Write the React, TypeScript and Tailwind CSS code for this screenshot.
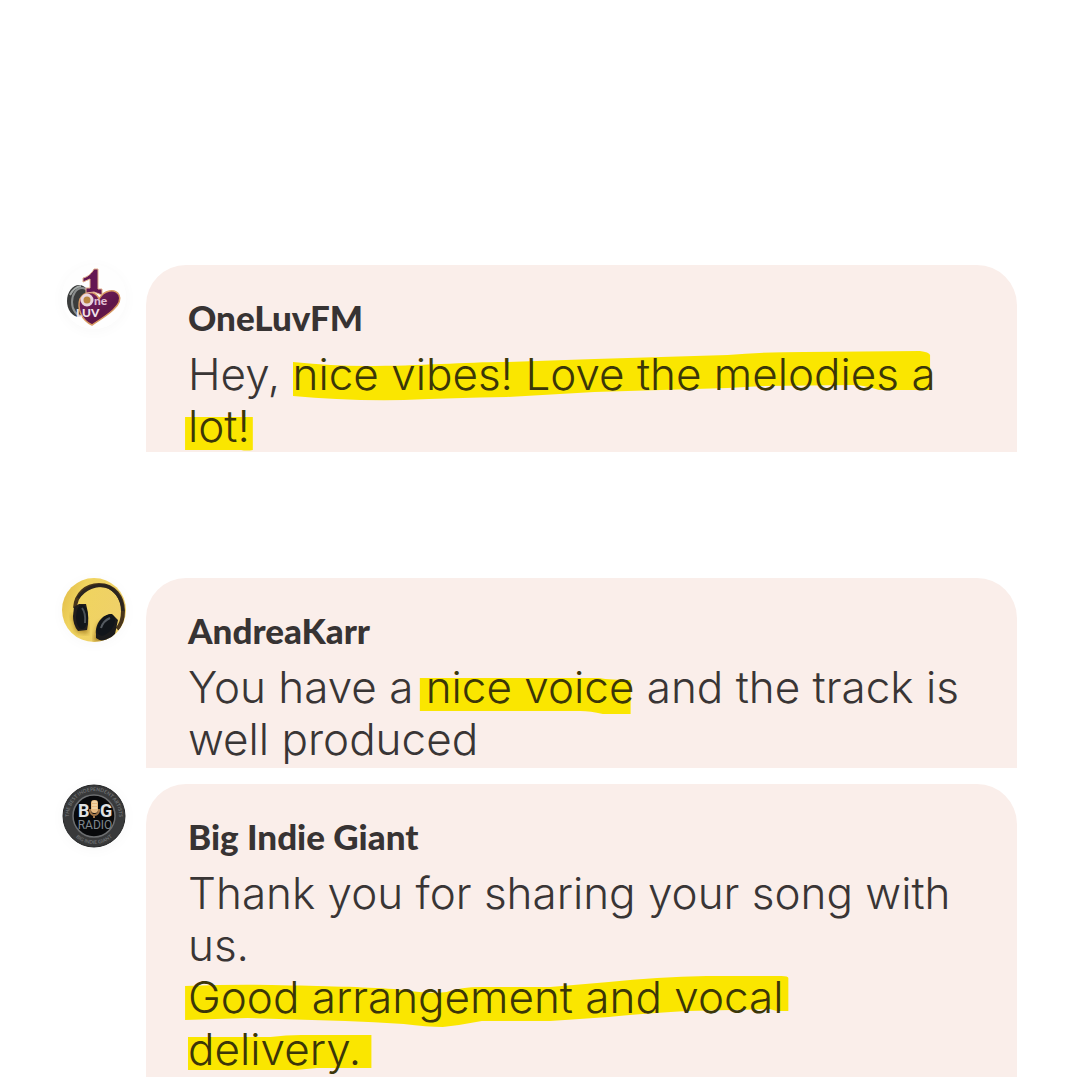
import type { ReactNode } from "react";
import clsx from "clsx";

type Line = {
  text: string;
  marked?: string;
  // rest of the line after the marked phrase
  after?: string;
  // width of the marked text that the stroke path was drawn for
  strokeWidth?: number;
  stroke?: string;
};

type Comment = {
  author: string;
  avatar: ReactNode;
  lines: Line[];
  className?: string;
  cardClassName?: string;
};

const OneLuvLogo = () => (
  <svg viewBox="0 0 64 64" className="size-16" aria-hidden="true">
    <defs>
      <linearGradient id="luv-heart" x1="0" y1="0" x2="1" y2="1">
        <stop offset="0" stopColor="#7c2566" />
        <stop offset="0.6" stopColor="#5d1549" />
        <stop offset="1" stopColor="#8a2a3c" />
      </linearGradient>
    </defs>
    <circle cx="32" cy="32" r="32" fill="#fefefe" />
    <ellipse cx="17" cy="36" rx="12" ry="16" fill="#3a3c3c" />
    <ellipse cx="20" cy="37" rx="10" ry="14" fill="none" stroke="#8b8f8f" strokeWidth="2" />
    <path d="M8 30Q12 22 19 21" fill="none" stroke="#a5aaa8" strokeWidth="2" />
    <path
      d="M30 60C19 55 15 43 18 34C22 26 33 25 37 34C42 25 53 23 57 30C62 40 44 51 30 60Z"
      fill="url(#luv-heart)"
      stroke="#d89a62"
      strokeWidth="1.5"
    />
    <path
      d="M21 13C26 12 30 8 32 4L36 4V24H40V30L32 27L24 28V23H28V14L21 17Z"
      fill="#641653"
      stroke="#e3b08c"
      strokeWidth="1"
    />
    <circle cx="25" cy="35" r="5" fill="#b98540" stroke="#ead6df" strokeWidth="3" />
    <text x="32" y="40" fill="#e0bfd2" className="font-['Lato'] text-[12px] font-black">
      ne
    </text>
    <text x="14" y="52" fill="#f0e2ea" className="font-['Lato'] text-[12px] font-black">
      LUV
    </text>
  </svg>
);

const HeadphonesPhoto = () => (
  <svg viewBox="0 0 64 64" className="size-16" aria-hidden="true">
    <defs>
      <clipPath id="phones-clip">
        <circle cx="32" cy="32" r="32" />
      </clipPath>
      <linearGradient id="phones-bg" x1="0" y1="0" x2="1" y2="0.4">
        <stop offset="0" stopColor="#dfb744" />
        <stop offset="0.35" stopColor="#f0d45f" />
        <stop offset="1" stopColor="#efd069" />
      </linearGradient>
      <filter id="phones-shadow">
        <feGaussianBlur stdDeviation="2" />
      </filter>
    </defs>
    <g clipPath="url(#phones-clip)">
      <rect width="64" height="64" fill="url(#phones-bg)" />
      <path d="M9 36L14 54L26 56V45Z" fill="#9c751c" opacity="0.7" filter="url(#phones-shadow)" />
      <path d="M32 60L36 46L50 40L47 64H32Z" fill="#9c751c" opacity="0.8" filter="url(#phones-shadow)" />
      <path
        d="M13 30C14 16 24 7 37 7C53 7 61 20 61 33C61 41 59 47 55 51"
        fill="none"
        stroke="#48351b"
        strokeWidth="4"
      />
      <path d="M16 20C23 10 34 6 44 8C53 11 60 20 61 33" fill="none" stroke="#2b251f" strokeWidth="3" />
      <path d="M12 29L17 26L24 26Q28 40 25 52L16 53Q11 47 11 38Z" fill="#211e1d" />
      <ellipse cx="20" cy="39" rx="6" ry="12" fill="#11151a" />
      <path d="M20 30Q24 35 23 45" fill="none" stroke="#4b5157" strokeWidth="2" />
      <path d="M34 56C33 46 40 36 50 36L56 42L53 56C48 64 39 64 34 60Z" fill="#1b1b1c" />
      <ellipse cx="44" cy="47" rx="7" ry="12" transform="rotate(35 44 47)" fill="#11151a" />
      <path d="M39 50Q41 43 48 40" fill="none" stroke="#555b62" strokeWidth="2" />
    </g>
  </svg>
);

const BigRadioLogo = () => (
  <svg viewBox="0 0 64 64" className="size-16" aria-hidden="true">
    <defs>
      <path id="ring-top" d="M7 32A25 25 0 0 1 57 32" />
      <path id="ring-bottom" d="M4 32A28 28 0 0 0 60 32" />
    </defs>
    <circle cx="32" cy="32" r="31" fill="#38393a" stroke="#252627" strokeWidth="1" />
    <circle cx="32" cy="32" r="21" fill="#08090b" stroke="#6c6e70" strokeWidth="1.5" />
    <g fill="#6f7173" className="font-['Lato'] text-[5px] font-bold">
      <text>
        <textPath href="#ring-top" startOffset="50%" textAnchor="middle">
          THE BEST INDEPENDENT ARTISTS
        </textPath>
      </text>
      <text>
        <textPath href="#ring-bottom" startOffset="50%" textAnchor="middle">
          BIG INDIE GIANT
        </textPath>
      </text>
    </g>
    <text x="16" y="33" fill="#e0e2e4" className="font-['Roboto'] text-[18px] font-bold">
      B
    </text>
    <text x="38" y="33" fill="#e0e2e4" className="font-['Roboto'] text-[18px] font-bold">
      G
    </text>
    <rect x="29" y="16" width="7" height="13" rx="3" fill="#e6b87e" />
    <path d="M30 18H35M30 21H35M30 24H35" stroke="#fff0ca" strokeWidth="1" />
    <path d="M28 25V27Q29 31 32 31Q36 31 37 27V25M32 31V34" fill="none" stroke="#a07446" strokeWidth="2" />
    <text x="33" y="45" textAnchor="middle" fill="#7f868d" className="font-['Roboto'] text-[12px]">
      RADIO
    </text>
  </svg>
);

const comments: Comment[] = [
  {
    author: "OneLuvFM",
    avatar: <OneLuvLogo />,
    className: "mb-[126px]",
    lines: [
      {
        text: "Hey, ",
        marked: "nice vibes! Love the melodies a",
        strokeWidth: 642,
        stroke:
          "M0 14Q40 18 71 18C130 18 170 14 213 14L301 11L434 7Q470 4 510 4L626 3Q635 4 636 7V42H585Q570 37 558 37L471 38L434 40L301 44L213 49Q160 50 111 52Q50 53 0 48Z",
      },
      {
        text: "",
        marked: "lot!",
        strokeWidth: 63,
        stroke: "M-3 17H66V50Q60 51 54 50H-3Z",
      },
    ],
  },
  {
    author: "AndreaKarr",
    avatar: <HeadphonesPhoto />,
    className: "mb-4",
    cardClassName: "pb-[3px]",
    lines: [
      {
        text: "You have a ",
        marked: "nice voice",
        after: " and the track is",
        strokeWidth: 203,
        stroke: "M-6 17H168Q180 19 199 19V53H172Q160 50 150 50H-6Z",
      },
      { text: "well produced" },
    ],
  },
  {
    author: "Big Indie Giant",
    avatar: <BigRadioLogo />,
    cardClassName: "pb-[2px]",
    lines: [
      { text: "Thank you for sharing your song with" },
      { text: "us." },
      {
        text: "",
        marked: "Good arrangement and vocal",
        strokeWidth: 610,
        stroke:
          "M-3 15Q50 13 86 14C140 15 180 16 211 18C235 21 252 23 265 21Q280 16 300 16H371L431 11Q480 6 531 5H608Q615 5 615 7V40H603L596 38L511 40Q460 43 431 46L371 50L301 50Q280 54 261 56Q245 56 221 53Q190 51 161 50L61 47L-3 49Z",
      },
      {
        text: "",
        marked: "delivery.",
        strokeWidth: 168,
        stroke: "M0 14H80Q95 12 110 12H178V45H125L105 47H0Z",
      },
    ],
  },
];

const CommentLine = ({ line }: { line: Line }) => (
  <span className="block whitespace-pre">
    {line.text}
    {line.marked && (
      <mark className="relative inline-block bg-transparent text-[#3b3608]">
        <svg
          viewBox={`0 0 ${line.strokeWidth} 52`}
          preserveAspectRatio="none"
          className="absolute inset-0 size-full overflow-visible"
          aria-hidden="true"
        >
          <path d={line.stroke} fill="#fae600" />
        </svg>
        <span className="relative">{line.marked}</span>
      </mark>
    )}
    {line.after}
  </span>
);

const CommentCard = ({ comment }: { comment: Comment }) => (
  <li className={clsx("flex items-start gap-5", comment.className)}>
    <div className="shrink-0 rounded-full shadow-[0_2px_14px_#00000008]">{comment.avatar}</div>
    <article
      className={clsx(
        "min-w-0 flex-1 rounded-t-[40px] bg-[#faeeea] px-[42px] pt-[34px]",
        comment.cardClassName
      )}
    >
      <h2 className="font-['Lato',sans-serif] text-[35px] leading-9 font-black text-[#373333]">
        {comment.author}
      </h2>
      <p className="mt-[13px] font-['Inter',sans-serif] text-[44px] leading-[52px] font-light text-[#393535]">
        {comment.lines.map((line, i) => (
          <CommentLine key={i} line={line} />
        ))}
      </p>
    </article>
  </li>
);

export default function App() {
  return (
    <main className="min-h-screen bg-white">
      <ul className="pt-[265px] pr-[63px] pl-[62px]">
        {comments.map((comment) => (
          <CommentCard key={comment.author} comment={comment} />
        ))}
      </ul>
    </main>
  );
}
